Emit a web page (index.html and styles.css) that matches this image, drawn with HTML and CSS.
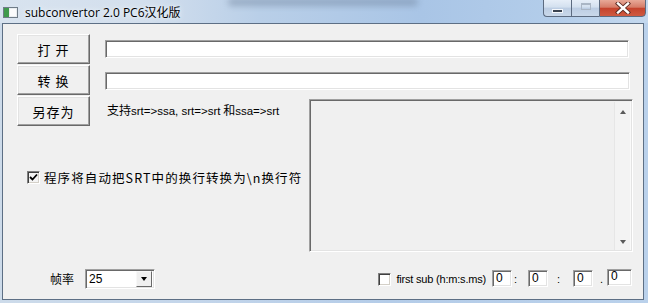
FILE: index.html
```html
<!DOCTYPE html>
<html lang="zh-CN">
<head>
<meta charset="utf-8">
<title>subconvertor 2.0 PC6汉化版</title>
<link rel="stylesheet" href="styles.css">
</head>
<body>
<div class="window">
  <div class="titlebar">
    <svg class="app-icon" width="15" height="11" viewBox="0 0 15 11">
      <rect x="0.5" y="0.5" width="14" height="10" fill="#e9edf0" stroke="#6f7c88"/>
      <rect x="1" y="1" width="5" height="9" fill="#3f9a4c"/>
      <rect x="7" y="2" width="6" height="7" fill="#fafbfc"/>
    </svg>
    <span class="title">subconvertor 2.0 PC6汉化版</span>
    <span class="glass-blur"></span>
    <div class="caption-buttons">
      <div class="cap cap-min"><span class="min-glyph"></span></div>
      <div class="cap cap-max"><span class="max-glyph"></span></div>
      <div class="cap cap-close">
        <svg width="18" height="12" viewBox="0 0 18 12">
          <path d="M4 1.5 L14 10.5 M14 1.5 L4 10.5" stroke="#5a2a22" stroke-width="4.2" stroke-linecap="square"/>
          <path d="M4 1.5 L14 10.5 M14 1.5 L4 10.5" stroke="#ffffff" stroke-width="2.4" stroke-linecap="square"/>
        </svg>
      </div>
    </div>
  </div>
  <div class="frame">
    <div class="client">
      <div class="row">
        <button class="btn">打 开</button>
        <div class="field field-1"></div>
      </div>
      <div class="row">
        <button class="btn">转 换</button>
        <div class="field field-2"></div>
      </div>
      <div class="main">
        <div class="left">
          <div class="row row-3">
            <button class="btn">另存为</button>
            <span class="support">支持<span class="lat">srt=&gt;ssa, srt=&gt;srt</span> 和<span class="lat">ssa=&gt;srt</span></span>
          </div>
          <div class="check check-main">
            <span class="box">
              <svg width="9" height="9" viewBox="0 0 9 9"><path d="M1 4 L3.5 6.5 L8 1.5" fill="none" stroke="#000" stroke-width="1.8"/></svg>
            </span>
            <span class="check-label">程序将自动把SRT中的换行转换为\n换行符</span>
          </div>
        </div>
        <div class="memo">
          <div class="scrollbar">
            <span class="arrow-up"></span>
            <span class="arrow-down"></span>
          </div>
        </div>
      </div>
      <div class="bottom">
        <span class="fps-label">帧率</span>
        <div class="combo">
          <span class="combo-value">25</span>
          <span class="combo-drop"><span class="tri"></span></span>
        </div>
        <div class="firstsub">
          <span class="box box-small"></span>
          <span class="fs-label">first sub (h:m:s.ms)</span>
          <span class="num num-1">0</span>
          <span class="sep sep-1">:</span>
          <span class="num num-2">0</span>
          <span class="sep sep-2">:</span>
          <span class="num num-3">0</span>
          <span class="sep sep-3">.</span>
          <span class="num num-4">0</span>
        </div>
      </div>
    </div>
  </div>
</div>
</body>
</html>
```

FILE: styles.css
```css
* { box-sizing: border-box; }
html, body { margin: 0; padding: 0; }
body {
  width: 648px;
  height: 303px;
  overflow: hidden;
  background: #bcd2ea;
  font-family: "Noto Sans CJK SC", "Noto Sans", sans-serif;
}
.window {
  width: 648px;
  height: 303px;
  display: flex;
  flex-direction: column;
  background: linear-gradient(90deg, #cddbea 0%, #c3d5ea 30%, #b4cce8 60%, #bad1eb 100%);
}

/* ---------- title bar ---------- */
.titlebar {
  position: relative;
  height: 23px;
  flex: none;
  display: flex;
  align-items: center;
  padding-left: 3px;
  background: linear-gradient(90deg, #d8e3ef 0%, #d3dfed 22%, #b9cfe8 40%, #a9c5e6 65%, #b3cdea 85%, #c4d8ee 100%);
}
.app-icon { flex: none; margin-top: 1px; }
.title {
  margin-left: 7px;
  font-family: "Open Sans", "Noto Sans CJK SC", sans-serif;
  font-size: 12px;
  color: #000;
  text-shadow: 0 0 6px #eef4fb, 0 0 3px #eef4fb;
  margin-top: 1px;
}
.glass-blur {
  position: absolute;
  left: 228px;
  top: -2px;
  width: 190px;
  height: 8px;
  background: #6c7f98;
  opacity: 0.45;
  filter: blur(3px);
  border-radius: 4px;
}
.caption-buttons {
  position: absolute;
  right: 2px;
  top: -1px;
  display: flex;
}
.cap {
  height: 18px;
  border: 1px solid #5c6b80;
  display: flex;
  align-items: center;
  justify-content: center;
}
.cap-min {
  width: 28px;
  border-radius: 0 0 0 4px;
  border-right: none;
  background: linear-gradient(180deg, #e6eef8 0%, #d3e0ef 45%, #bccde3 50%, #c9d8ea 100%);
}
.cap-max {
  width: 28px;
  border-right: none;
  background: linear-gradient(180deg, #e6eef8 0%, #d3e0ef 45%, #bccde3 50%, #c9d8ea 100%);
}
.cap-close {
  width: 47px;
  border-radius: 0 0 4px 0;
  background: linear-gradient(180deg, #e8a998 0%, #d67c68 45%, #c5432d 52%, #cf5a41 100%);
}
.min-glyph {
  width: 11px;
  height: 4px;
  background: #3a4350;
  border: 1px solid #f4f7fb;
  margin-top: 6px;
}
.max-glyph {
  width: 10px;
  height: 7px;
  border: 1px solid #aab6c5;
  border-top-width: 2px;
  background: transparent;
  margin-bottom: 3px;
}

/* ---------- frame + client ---------- */
.frame {
  flex: 1;
  display: flex;
  padding: 0 4px 3px 2px;
}
.client {
  flex: 1;
  background: #f0f0f0;
  border: 1px solid #5d6f85;
  padding: 10px 0 0 14px;
  display: flex;
  flex-direction: column;
  font-family: "Noto Sans CJK SC", "Noto Sans", sans-serif;
  font-size: 12px;
  color: #000;
}
.row {
  display: flex;
  align-items: center;
  height: 30px;
  margin-bottom: 1px;
}
.btn {
  flex: none;
  width: 73px;
  height: 30px;
  margin: 0;
  padding: 0;
  background: #f0f0f0;
  border: 1px solid;
  border-color: #ffffff #696969 #696969 #ffffff;
  box-shadow: inset -1px -1px 0 #a0a0a0, inset 1px 1px 0 #e3e3e3;
  font-family: "Noto Sans CJK SC", sans-serif;
  font-size: 13px;
  letter-spacing: 1px;
  color: #000;
  white-space: pre;
}
.field {
  height: 18px;
  background: #fff;
  border: 1px solid;
  border-color: #a0a0a0 #ffffff #ffffff #a0a0a0;
  box-shadow: inset 1px 1px 0 #696969, inset -1px -1px 0 #e3e3e3;
  margin-left: 15px;
}
.field-1 { width: 524px; }
.field-2 { width: 525px; margin-top: 1px; }

.main {
  display: flex;
  align-items: flex-start;
}
.left {
  width: 292px;
  flex: none;
  display: flex;
  flex-direction: column;
}
.row-3 { margin-bottom: 0; }
.support {
  margin-left: 17px;
  font-size: 12px;
  margin-top: -4px;
  white-space: nowrap;
}
.lat {
  font-family: "Liberation Sans", sans-serif;
  font-size: 11.5px;
  letter-spacing: 0;
}
.check {
  display: flex;
  align-items: center;
}
.check-main {
  margin-top: 44px;
  margin-left: 10px;
  height: 15px;
}
.box {
  width: 13px;
  height: 13px;
  flex: none;
  background: #fff;
  border: 1px solid;
  border-color: #808080 #ffffff #ffffff #808080;
  box-shadow: inset 1px 1px 0 #404040, inset -1px -1px 0 #d4d0c8;
  display: flex;
  align-items: center;
  justify-content: center;
}
.check-main .box { background: #f4f4f4; }
.check-label {
  margin-left: 4px;
  font-size: 12.5px;
  letter-spacing: 1.1px;
  white-space: nowrap;
}
.memo {
  margin-top: 3px;
  width: 324px;
  height: 153px;
  flex: none;
  background: #f0f0f0;
  border: 1px solid;
  border-color: #a0a0a0 #ffffff #ffffff #a0a0a0;
  box-shadow: inset 1px 1px 0 #696969, inset -1px -1px 0 #e3e3e3;
  display: flex;
  justify-content: flex-end;
  padding: 2px 1px 1px 2px;
}
.scrollbar {
  width: 17px;
  height: 100%;
  background: #f3f3f3;
  border-left: 1px solid #e6e6e6;
  border-right: 1px solid #fafafa;
  display: flex;
  flex-direction: column;
  align-items: center;
  justify-content: space-between;
  padding: 8px 0 6px;
}
.arrow-up, .arrow-down {
  width: 0;
  height: 0;
  border-left: 3.5px solid transparent;
  border-right: 3.5px solid transparent;
}
.arrow-up { border-bottom: 4px solid #5a5a5a; }
.arrow-down { border-top: 4px solid #5a5a5a; }

/* ---------- bottom row ---------- */
.bottom {
  margin-top: 16px;
  height: 21px;
  display: flex;
  align-items: center;
  padding-left: 33px;
}
.fps-label {
  font-size: 12px;
  width: 35px;
}
.combo {
  width: 70px;
  height: 20px;
  background: #fff;
  border: 1px solid;
  border-color: #a0a0a0 #ffffff #ffffff #a0a0a0;
  box-shadow: inset 1px 1px 0 #696969, inset -1px -1px 0 #e3e3e3;
  display: flex;
  align-items: center;
  justify-content: space-between;
  padding: 2px 2px 2px 3px;
}
.combo-value {
  font-family: "Liberation Sans", sans-serif;
  font-size: 12px;
}
.combo-drop {
  width: 16px;
  height: 16px;
  background: #f0f0f0;
  border: 1px solid;
  border-color: #f8f8f8 #696969 #696969 #f8f8f8;
  display: flex;
  align-items: center;
  justify-content: center;
}
.tri {
  width: 0;
  height: 0;
  border-left: 3.5px solid transparent;
  border-right: 3.5px solid transparent;
  border-top: 4px solid #000;
}
.firstsub {
  margin-left: auto;
  margin-right: 11px;
  display: flex;
  align-items: center;
}
.box-small { margin-top: 1px; }
.fs-label {
  margin-left: 5px;
  font-family: "Liberation Sans", sans-serif;
  font-size: 11px;
  letter-spacing: -0.2px;
}
.num {
  width: 20px;
  height: 17px;
  background: #fff;
  border: 1px solid;
  border-color: #a0a0a0 #ffffff #ffffff #a0a0a0;
  box-shadow: inset 1px 1px 0 #696969, inset -1px -1px 0 #e3e3e3;
  font-family: "Liberation Sans", sans-serif;
  font-size: 12px;
  line-height: 15px;
  padding-left: 3px;
}
.num-1 { margin-left: 6px; }
.num-4 { width: 25px; height: 17px; margin-top: -3px; line-height: 13px; }
.sep {
  font-family: "Liberation Sans", sans-serif;
  font-size: 11px;
}
.sep-1 { margin-left: 2px; width: 14px; }
.sep-2 { margin-left: 9px; width: 16px; }
.sep-3 { margin-left: 7px; width: 7px; }
```
